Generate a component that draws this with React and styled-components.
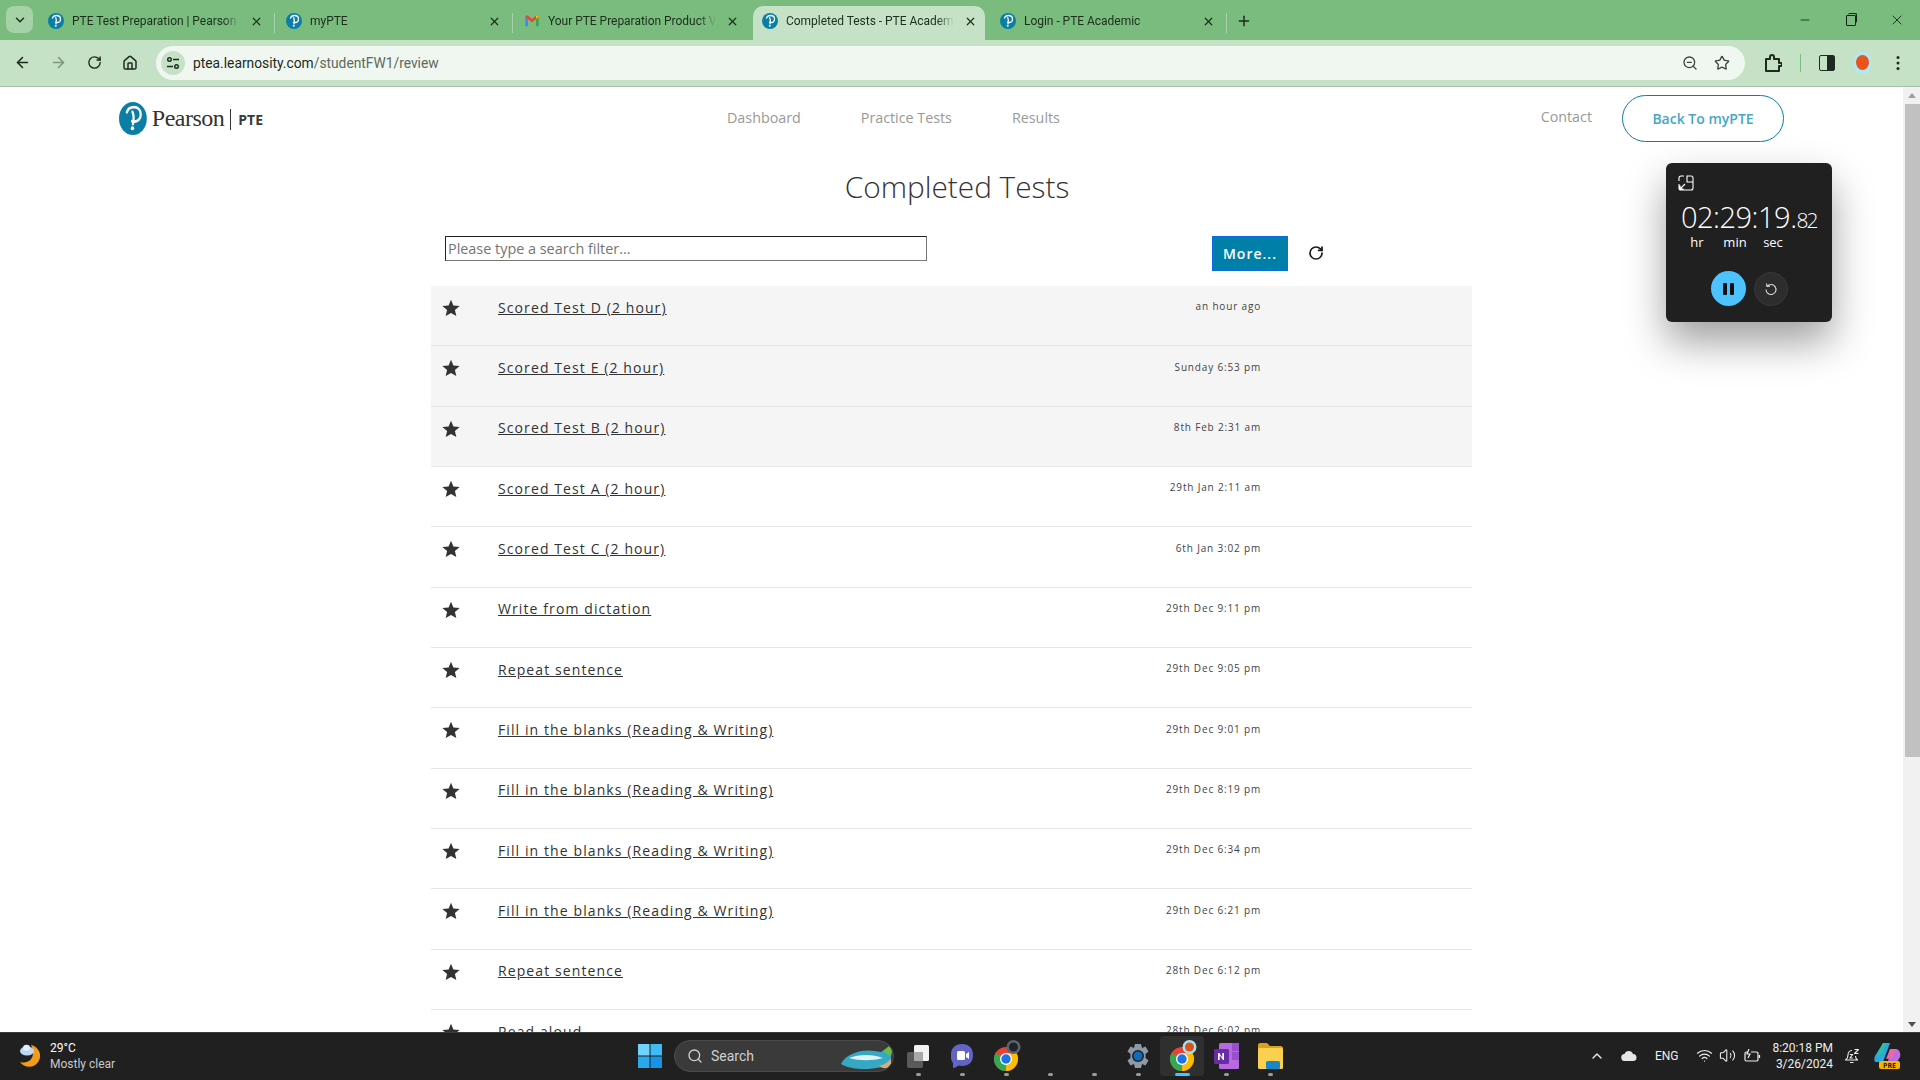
import React from 'react';
import styled, { createGlobalStyle } from 'styled-components';
import {
  ArrowLeft,
  ArrowRight,
  RotateCw,
  Home,
  ZoomOut,
  Star,
  X,
  Plus,
  Minus,
  ChevronDown,
  ChevronUp,
  Wifi,
  Volume2,
  Search,
} from 'lucide-react';

const GlobalStyle = createGlobalStyle`
  html, body {
    margin: 0;
    height: 100%;
    overflow: hidden;
    background: #fff;
    font-family: "Open Sans", "Liberation Sans", sans-serif;
  }
`;

const Screen = styled.div`
  display: flex;
  flex-direction: column;
  width: 1920px;
  height: 1080px;
  overflow: hidden;
`;

/* browser tab strip */
const TabStrip = styled.div`
  display: flex;
  align-items: flex-end;
  flex: 0 0 40px;
  height: 40px;
  padding-left: 6px;
  background: #7abc7d;
  box-sizing: border-box;
`;

const TabSearch = styled.div`
  display: flex;
  align-items: center;
  justify-content: center;
  width: 27px;
  height: 27px;
  margin: 0 4px 7px 0;
  border-radius: 8px;
  background: #a6d2a8;
  color: #1d2f1e;
`;

const Tab = styled.div`
  position: relative;
  display: flex;
  align-items: center;
  gap: 8px;
  width: 238px;
  height: 34px;
  padding: 0 11px 4px 11px;
  box-sizing: border-box;
  font-family: Roboto, sans-serif;
  font-size: 12px;
  letter-spacing: -0.03px;
  color: #1c2e1d;
  z-index: ${(p) => (p.$active ? 1 : 0)};

  &::before {
    content: '';
    position: absolute;
    top: 0;
    bottom: 0;
    left: 1.5px;
    right: 4px;
    border-radius: 10px 10px 0 0;
    background: ${(p) => (p.$active ? '#c5e2c6' : 'transparent')};
    z-index: -1;
  }

  &::after {
    content: '';
    position: absolute;
    top: 7px;
    bottom: 7px;
    right: 0;
    width: 1px;
    background: ${(p) => (p.$sep ? '#a8d2aa' : 'transparent')};
  }
`;

const TabTitle = styled.span`
  flex: 1;
  overflow: hidden;
  white-space: nowrap;
  mask-image: linear-gradient(to right, #000 90%, transparent 100%);
`;

const TabClose = styled.span`
  display: flex;
  justify-content: center;
  width: 16px;
  color: #1c2e1d;
`;

const NewTab = styled.div`
  display: flex;
  align-items: center;
  height: 34px;
  margin-left: 9px;
  padding-bottom: 4px;
  box-sizing: border-box;
  color: #1c2e1d;
`;

const WindowControls = styled.div`
  display: flex;
  align-items: center;
  gap: 33.5px;
  height: 40px;
  margin-left: auto;
  padding-right: 15px;
  color: #16221a;
`;

const RestoreIcon = styled.span`
  position: relative;
  display: block;
  width: 8px;
  height: 9px;
  border: 1px solid #16221a;
  border-radius: 1px;

  &::after {
    content: '';
    position: absolute;
    top: -3px;
    left: 1px;
    width: 8px;
    height: 9px;
    border-top: 1px solid #16221a;
    border-right: 1px solid #16221a;
    border-radius: 2px;
  }
`;

/* browser toolbar */
const Toolbar = styled.div`
  display: flex;
  align-items: center;
  flex: 0 0 47px;
  height: 47px;
  padding: 0 0 1px 13px;
  box-sizing: border-box;
  background: #c5e2c6;
  border-bottom: 1px solid #a9bfaa;
`;

const NavIcon = styled.span`
  display: flex;
  justify-content: center;
  width: 18px;
  margin-right: 18px;
  color: ${(p) => (p.$off ? '#7f9680' : '#1e2a1f')};
`;

const Omnibox = styled.div`
  display: flex;
  align-items: center;
  width: 1589px;
  height: 34px;
  margin-left: -1px;
  padding: 0 15px 0 5px;
  box-sizing: border-box;
  border-radius: 17px;
  background: #f0f7f0;
  font-family: Roboto, sans-serif;
  font-size: 13.8px;
`;

const SiteBadge = styled.span`
  display: flex;
  align-items: center;
  justify-content: center;
  width: 24px;
  height: 24px;
  margin-right: 8px;
  border-radius: 50%;
  background: #c5e2c6;
`;

const UrlHost = styled.span`
  color: #1c2a1d;
`;

const UrlPath = styled.span`
  color: #5c6a5d;
`;

const OmniIcons = styled.span`
  display: flex;
  align-items: center;
  gap: 16px;
  margin-left: auto;
  color: #3a463b;
`;

const ToolIcons = styled.div`
  display: flex;
  align-items: center;
  margin-left: 19px;
  color: #1e2a1f;
`;

const ToolDivider = styled.span`
  width: 1px;
  height: 18px;
  margin: 0 18px;
  background: #7dbb80;
`;

const SidePanelIcon = styled.span`
  display: block;
  width: 14px;
  height: 14px;
  border: 1.5px solid #1e2a1f;
  border-radius: 2px;
  background: linear-gradient(to right, transparent 50%, #1e2a1f 50%);
`;

const Profile = styled.span`
  display: flex;
  align-items: center;
  justify-content: center;
  width: 19px;
  height: 22px;
  margin-left: 18px;
  border-radius: 50%;
  background: #b4e8f0;
`;

const ProfileBall = styled.span`
  display: block;
  width: 13px;
  height: 15px;
  border-radius: 50%;
  background: #e8541c;
`;

const MenuDots = styled.span`
  display: flex;
  margin-left: 24px;
`;

/* page */
const Main = styled.div`
  position: relative;
  display: flex;
  flex: 1;
  min-height: 0;
  overflow: hidden;
`;

const Content = styled.div`
  flex: 1;
  min-width: 0;
`;

const Header = styled.header`
  display: flex;
  align-items: center;
  height: 62px;
  padding: 0 119px;
`;

const Logo = styled.div`
  display: flex;
  align-items: center;
  width: 144px;
`;

const LogoName = styled.span`
  margin-left: 5px;
  font-family: "Liberation Serif", serif;
  font-size: 24px;
  letter-spacing: -0.5px;
  color: #333;
`;

const LogoBar = styled.span`
  width: 1px;
  height: 21px;
  margin: 2px 7px 0 6px;
  background: #333;
`;

const LogoProduct = styled.span`
  margin-top: 3px;
  font-size: 14px;
  font-weight: 700;
  color: #3a3a3a;
`;

const Nav = styled.nav`
  display: flex;
  gap: 60px;
  margin: -2px 0 0 464px;
`;

const NavLink = styled.a`
  font-size: 14.3px;
  color: #999;
`;

const Contact = styled(NavLink)`
  margin: -4px 30px 0 auto;
`;

const BackButton = styled.a`
  display: flex;
  align-items: center;
  justify-content: center;
  width: 162px;
  height: 47px;
  box-sizing: border-box;
  border: 1px solid #0a7ea4;
  border-radius: 24px;
  font-size: 14px;
  font-weight: 600;
  color: #47a6c6;
`;

const Container = styled.div`
  width: 1041px;
  margin: 0 auto;
`;

const Title = styled.h1`
  margin: 17px 0 28px;
  padding-left: 11px;
  font-size: 29.8px;
  line-height: 42px;
  font-weight: 300;
  text-align: center;
  color: #333;
`;

const FilterBar = styled.div`
  display: flex;
  align-items: flex-start;
  height: 35px;
  margin-bottom: 15px;
  padding-left: 14px;
`;

const SearchInput = styled.input`
  width: 482px;
  height: 25px;
  padding: 0 2px;
  box-sizing: border-box;
  border: 2px inset #767676;
  border-width: 1.5px;
  border-radius: 0;
  font-family: "Open Sans", sans-serif;
  font-size: 14.4px;

  &::placeholder {
    color: #757575;
    opacity: 1;
  }
`;

const MoreButton = styled.button`
  width: 76px;
  height: 35px;
  margin-left: 285px;
  padding: 0;
  border: 1px solid #0a6ce0;
  background: #0080a8;
  font-family: "Open Sans", sans-serif;
  font-size: 14px;
  font-weight: 600;
  letter-spacing: 1px;
  color: #fff;
`;

const Refresh = styled.span`
  display: flex;
  margin: 9px 0 0 20px;
  color: #1c1c1c;
`;

const Row = styled.div`
  display: grid;
  grid-template-columns: 56px 1fr auto;
  height: 60.35px;
  padding: 9.7px 211px 0 11px;
  box-sizing: border-box;
  border-bottom: 1px solid #e7e7e7;
  background: ${(p) => (p.$seen ? '#f5f5f5' : '#fff')};
`;

const StarMark = styled.svg`
  display: block;
  width: 18px;
  height: 18px;
  margin-top: 3.3px;
  fill: #333;
`;

const RowTitle = styled.a`
  font-size: 14px;
  line-height: 19px;
  letter-spacing: 1.1px;
  color: #333;
  text-decoration: underline;
`;

const RowDate = styled.span`
  margin-top: 3.5px;
  font-size: 10px;
  line-height: 14px;
  letter-spacing: 0.83px;
  color: #444;
`;

const Scrollbar = styled.div`
  position: relative;
  flex: 0 0 17px;
  background: #f1f1f1;
`;

const ScrollThumb = styled.div`
  position: absolute;
  top: 17px;
  left: 2px;
  right: 0;
  height: 653px;
  background: #c1c1c1;
`;

const ScrollArrow = styled.span`
  position: absolute;
  left: 5px;
  ${(p) => (p.$down ? 'bottom: 5px;' : 'top: 6px;')}
  width: 0;
  height: 0;
  border-left: 4px solid transparent;
  border-right: 4px solid transparent;
  ${(p) =>
    p.$down
      ? 'border-top: 5px solid #505050;'
      : 'border-bottom: 5px solid #a0a0a0;'}
`;

/* stopwatch floating over the page */
const Timer = styled.div`
  position: absolute;
  top: 76px;
  right: 88px;
  display: flex;
  flex-direction: column;
  width: 166px;
  height: 159px;
  padding: 12px 0 0;
  box-sizing: border-box;
  border-radius: 6px;
  background: #202020;
  box-shadow: 0 20px 40px rgba(0, 0, 0, 0.38);
  color: #fff;
  font-family: "Open Sans", sans-serif;
`;

const TimerExpand = styled.svg`
  display: block;
  width: 16px;
  height: 16px;
  margin-left: 12px;
  fill: none;
  stroke: #fff;
  stroke-width: 1.1;
`;

const TimerClock = styled.div`
  margin-top: 7px;
  padding-left: 15px;
  font-size: 29px;
  font-weight: 300;
  letter-spacing: -0.5px;
  line-height: 38px;
  white-space: nowrap;
`;

const TimerFraction = styled.span`
  font-size: 21px;
  letter-spacing: -2px;
`;

const TimerUnits = styled.div`
  display: grid;
  grid-template-columns: 38px 38px 38px;
  margin: -5px 0 0 12px;
  font-size: 13px;
  line-height: 16px;
  text-align: center;
`;

const TimerButtons = styled.div`
  display: flex;
  align-items: center;
  gap: 8px;
  margin: 21px 0 0 45px;
`;

const PauseButton = styled.span`
  display: flex;
  align-items: center;
  justify-content: center;
  gap: 3px;
  width: 35px;
  height: 35px;
  border-radius: 50%;
  background: #4cc2ff;
`;

const PauseBar = styled.span`
  width: 4px;
  height: 12px;
  border-radius: 1px;
  background: #101010;
`;

const ResetButton = styled.span`
  display: flex;
  align-items: center;
  justify-content: center;
  width: 34px;
  height: 34px;
  box-sizing: border-box;
  border: 1px solid #383838;
  border-radius: 50%;
  background: #2d2d2d;
  color: #ddd;
`;

/* windows taskbar */
const Taskbar = styled.div`
  display: flex;
  align-items: center;
  flex: 0 0 48px;
  height: 48px;
  padding-bottom: 2px;
  box-sizing: border-box;
  border-top: 1px solid #3b3b3b;
  background: #202020;
  color: #fff;
  font-family: Roboto, sans-serif;
`;

const Weather = styled.div`
  display: flex;
  align-items: center;
  gap: 8px;
  width: 628px;
  padding-left: 19px;
  box-sizing: border-box;
`;

const WeatherText = styled.div`
  font-size: 12px;
  line-height: 16px;
`;

const WeatherSub = styled.div`
  color: #c9c9c9;
`;

const Apps = styled.div`
  display: flex;
  align-items: center;
  gap: 0;
`;

const Slot = styled.div`
  position: relative;
  display: flex;
  align-items: center;
  justify-content: center;
  width: 44px;
  height: 40px;
  border-radius: 4px;
  background: ${(p) => (p.$active ? '#2f2f2f' : 'transparent')};

  &::after {
    content: '';
    display: ${(p) => (p.$dot ? 'block' : 'none')};
    position: absolute;
    bottom: 0;
    left: 50%;
    width: ${(p) => (p.$active ? '15px' : '5px')};
    height: 3px;
    margin-left: ${(p) => (p.$active ? '-7.5px' : '-2.5px')};
    border-radius: 2px;
    background: ${(p) => (p.$active ? '#4cc2ff' : '#9b9b9b')};
  }
`;

const SearchBox = styled.div`
  position: relative;
  display: flex;
  align-items: center;
  gap: 8px;
  width: 220px;
  height: 32px;
  margin: 0 2px;
  padding-left: 12px;
  box-sizing: border-box;
  border: 1px solid #4a4a4a;
  border-radius: 16px;
  background: #3a3a3a;
  font-size: 14px;
  color: #d0d0d0;
  overflow: hidden;
`;

const SearchArt = styled.svg`
  position: absolute;
  right: 0;
  top: 3px;
  width: 54px;
  height: 26px;
`;

const Tray = styled.div`
  display: flex;
  align-items: center;
  margin-left: auto;
  color: #eee;
`;

const TrayItem = styled.span`
  display: flex;
  align-items: center;
  margin-left: ${(p) => p.$gap || 0}px;
`;

const TrayLang = styled.span`
  margin-left: 18px;
  font-size: 12px;
`;

const TrayClock = styled.div`
  margin-left: 11px;
  font-size: 12px;
  line-height: 16px;
  text-align: right;
`;

const PteIcon = ({ size = 16, height }) => (
  <svg width={size} height={height || size} viewBox="0 0 32 32" preserveAspectRatio="none">
    <circle cx="16" cy="16" r="16" fill="#0b7ea6" />
    <path
      d="M9 10c1-3 4-5 8-5 5 0 8 3 8 7s-3 7-7 7c-1 0-2 0-3-.4M15.500 9.500c1.500 3 1.500 8 .5 12"
      fill="none"
      stroke="#fff"
      strokeWidth="2.6"
      strokeLinecap="round"
    />
    <circle cx="15.500" cy="25.500" r="2" fill="#fff" />
  </svg>
);

const GmailIcon = () => (
  <svg width="16" height="16" viewBox="0 0 24 24">
    <path d="M2 20V6l4 3v11z" fill="#4285f4" />
    <path d="M18 20V9l4-3v14z" fill="#34a853" />
    <path d="M2 6c0-2 2-3 4-2l6 5 6-5c2-1 4 0 4 2l-10 8z" fill="#ea4335" />
    <path d="M18 9l4-3c0-2-2-3-4-2z" fill="#fbbc04" />
  </svg>
);

const tabs = [
  { title: 'PTE Test Preparation | Pearson PTE', icon: <PteIcon />, sep: true },
  { title: 'myPTE', icon: <PteIcon />, sep: true },
  { title: 'Your PTE Preparation Product Voucher', icon: <GmailIcon /> },
  { title: 'Completed Tests - PTE Academic', icon: <PteIcon />, active: true },
  { title: 'Login - PTE Academic', icon: <PteIcon />, sep: true },
];

const rows = [
  ['Scored Test D (2 hour)', 'an hour ago', true],
  ['Scored Test E (2 hour)', 'Sunday 6:53 pm', true],
  ['Scored Test B (2 hour)', '8th Feb 2:31 am', true],
  ['Scored Test A (2 hour)', '29th Jan 2:11 am'],
  ['Scored Test C (2 hour)', '6th Jan 3:02 pm'],
  ['Write from dictation', '29th Dec 9:11 pm'],
  ['Repeat sentence', '29th Dec 9:05 pm'],
  ['Fill in the blanks (Reading & Writing)', '29th Dec 9:01 pm'],
  ['Fill in the blanks (Reading & Writing)', '29th Dec 8:19 pm'],
  ['Fill in the blanks (Reading & Writing)', '29th Dec 6:34 pm'],
  ['Fill in the blanks (Reading & Writing)', '29th Dec 6:21 pm'],
  ['Repeat sentence', '28th Dec 6:12 pm'],
  ['Read aloud', '28th Dec 6:02 pm'],
];

const ChromeIcon = ({ badge }) => (
  <svg width="30" height="32" viewBox="0 0 30 32">
    <g transform="translate(3 7)">
      <circle cx="12" cy="12" r="12" fill="#ea4335" />
      <path d="M12 24A12 12 0 0 1 1.600 6L12 12z" fill="#34a853" />
      <path d="M12 24A12 12 0 0 0 22.400 6H12z" fill="#fbbc04" />
      <circle cx="12" cy="12" r="6" fill="#fff" />
      <circle cx="12" cy="12" r="4.700" fill="#1a73e8" />
    </g>
    <circle cx="22.500" cy="7" r="7" fill={badge === 'ball' ? '#a9dfe8' : '#5a646e'} />
    <circle cx="22.500" cy="7" r="4.500" fill={badge === 'ball' ? '#d9531e' : '#20242a'} />
  </svg>
);

const ExtensionIcon = () => (
  <svg width="18" height="18" viewBox="0 0 18 18" fill="none" stroke="#1e2a1f" strokeWidth="2" strokeLinejoin="round">
    <path d="M2 5h4V3a2 2 0 0 1 4 0v2h5v4h1.500a1.500 1.500 0 0 1 0 3H15v5H2z" />
  </svg>
);

const WindowsIcon = () => (
  <svg width="24" height="24" viewBox="0 0 24 24">
    <path d="M0 0h11.500v11.500H0z" fill="#6fd3fb" />
    <path d="M12.500 0H24v11.500H12.500z" fill="#3fbaf5" />
    <path d="M0 12.500h11.500V24H0z" fill="#2aa8ee" />
    <path d="M12.500 12.500H24V24H12.500z" fill="#1394e6" />
  </svg>
);

const TaskViewIcon = () => (
  <svg width="24" height="24" viewBox="0 0 24 24">
    <rect x="1" y="8" width="16" height="16" rx="2" fill="#5a5a5a" />
    <rect x="8" y="1" width="15" height="16" rx="1.500" fill="#f2f2f2" />
    <rect x="8" y="8" width="9" height="9" fill="#a8a8a8" />
  </svg>
);

const MeetIcon = () => (
  <svg width="24" height="26" viewBox="0 0 24 26">
    <path d="M12 1c7 0 11 4 11 11s-4 11-11 11c-1 0-2 0-3-.4L4 25c-1 .4-1-1-1-2v-3C1 18 1 15 1 12 1 5 5 1 12 1z" fill="#6264c8" />
    <rect x="7" y="8" width="8" height="9" rx="1.500" fill="#fff" />
    <path d="M16 11l3-2v7l-3-2z" fill="#fff" />
  </svg>
);

const GearIcon = () => (
  <svg width="24" height="26" viewBox="0 0 24 26">
    <path
      d="M9 1h6l1 4 3.500-1.500 3 5-3 2.500v4l3 2.500-3 5L16 21l-1 4H9l-1-4-3.500 1.500-3-5 3-2.500v-4l-3-2.500 3-5L8 5z"
      fill="#8d99a6"
    />
    <circle cx="12" cy="13" r="6" fill="#202020" />
    <circle cx="12" cy="13" r="4.500" fill="#0f6cbd" />
  </svg>
);

const OneNoteIcon = () => (
  <svg width="25" height="28" viewBox="0 0 25 28">
    <rect x="5" y="1" width="20" height="26" rx="1.500" fill="#b76ae0" />
    <path d="M18 1h7v8h-7zM18 10h7v8h-7z" fill="#9a4fcb" />
    <rect x="0" y="7" width="15" height="15" rx="1.500" fill="#6a2aa6" />
    <path d="M4 18v-7h1.300l3 4.500V11H10v7H9l-3.300-4.800V18z" fill="#fff" />
  </svg>
);

const FolderIcon = () => (
  <svg width="25" height="28" viewBox="0 0 25 28">
    <path d="M0 3c0-1 1-2 2-2h7l3 3h11c1 0 2 1 2 2v4H0z" fill="#d9a21a" />
    <rect x="0" y="6" width="25" height="21" rx="1.500" fill="#fcd04f" />
    <rect x="8" y="19" width="14" height="8" rx="1.500" fill="#1a86c8" />
  </svg>
);

const WeatherIcon = () => (
  <svg width="23" height="24" viewBox="0 0 23 24">
    <path d="M12 1a11 11 0 1 1-11 17c7 2 13-2 13-9 0-3-1-6-2-8z" fill="#f39c1b" />
    <ellipse cx="8" cy="7" rx="7" ry="4.500" fill="#bcd8f5" />
    <ellipse cx="7.500" cy="3.800" rx="3.500" ry="3" fill="#e4effb" />
  </svg>
);

const SnoozeBellIcon = () => (
  <svg width="16" height="16" viewBox="0 0 16 16" fill="none" stroke="#eee" strokeWidth="1.100" strokeLinejoin="round">
    <path d="M8 2.500C5 2.500 4 5 4 7c0 2.500-1 4-2.500 5h12C12 11 11.500 9.500 11.500 8M6 14.500h3.500" />
    <path d="M5.800 6.500h3l-3 3.500h3M10.500 1.500h4l-4 4h4" />
  </svg>
);

const CopilotIcon = () => (
  <svg width="28" height="28" viewBox="0 0 28 28">
    <path d="M9 1h7L9 20H2C0 20 0 17 1 14z" fill="#2ba8e0" />
    <path d="M9 1h5c-3 1-5 6-6 10L2 16z" fill="#30c48d" />
    <path d="M16 7h6c3 0 5 4 4 8l-3 5h-9z" fill="#b86de0" />
    <path d="M16 7h6l-3 9-7 1z" fill="#e86aa8" />
    <rect x="5" y="19" width="21" height="8" rx="2" fill="#f7b500" />
    <text x="15.500" y="25.800" fontSize="7" fontWeight="700" textAnchor="middle" fill="#1a1a1a" fontFamily="Open Sans, sans-serif">
      PRE
    </text>
  </svg>
);

const App = () => {
  return (
    <Screen>
      <GlobalStyle />
      <TabStrip>
        <TabSearch>
          <ChevronDown size={14} strokeWidth={2.5} />
        </TabSearch>
        {tabs.map((t) => (
          <Tab key={t.title} $active={t.active} $sep={t.sep}>
            {t.icon}
            <TabTitle>{t.title}</TabTitle>
            <TabClose>
              <X size={13} strokeWidth={2.2} />
            </TabClose>
          </Tab>
        ))}
        <NewTab>
          <Plus size={16} strokeWidth={2.2} />
        </NewTab>
        <WindowControls>
          <Minus size={14} strokeWidth={1.4} />
          <RestoreIcon />
          <X size={16} strokeWidth={1.3} />
        </WindowControls>
      </TabStrip>

      <Toolbar>
        <NavIcon>
          <ArrowLeft size={17} strokeWidth={2.2} />
        </NavIcon>
        <NavIcon $off>
          <ArrowRight size={17} strokeWidth={2.2} />
        </NavIcon>
        <NavIcon>
          <RotateCw size={15} strokeWidth={2.2} />
        </NavIcon>
        <NavIcon>
          <Home size={16} strokeWidth={2.2} />
        </NavIcon>
        <Omnibox>
          <SiteBadge>
            <svg width="14" height="14" viewBox="0 0 14 14" fill="none" stroke="#1e2a1f" strokeWidth="1.400">
              <circle cx="3.500" cy="3.500" r="1.800" />
              <path d="M7 3.500h6M1 10.500h6" />
              <circle cx="10.500" cy="10.500" r="1.800" />
            </svg>
          </SiteBadge>
          <UrlHost>ptea.learnosity.com</UrlHost>
          <UrlPath>/studentFW1/review</UrlPath>
          <OmniIcons>
            <ZoomOut size={16} strokeWidth={2} />
            <Star size={16} strokeWidth={2} />
          </OmniIcons>
        </Omnibox>
        <ToolIcons>
          <ExtensionIcon />
          <ToolDivider />
          <SidePanelIcon />
          <Profile>
            <ProfileBall />
          </Profile>
          <MenuDots>
            <svg width="4" height="16" viewBox="0 0 4 16" fill="#1e2a1f">
              <circle cx="2" cy="2.500" r="1.500" />
              <circle cx="2" cy="8" r="1.500" />
              <circle cx="2" cy="13.500" r="1.500" />
            </svg>
          </MenuDots>
        </ToolIcons>
      </Toolbar>

      <Main>
        <Content>
          <Header>
            <Logo>
              <PteIcon size={29} height={33} />
              <LogoName>Pearson</LogoName>
              <LogoBar />
              <LogoProduct>PTE</LogoProduct>
            </Logo>
            <Nav>
              <NavLink>Dashboard</NavLink>
              <NavLink>Practice Tests</NavLink>
              <NavLink>Results</NavLink>
            </Nav>
            <Contact>Contact</Contact>
            <BackButton>Back To myPTE</BackButton>
          </Header>
          <Container>
            <Title>Completed Tests</Title>
            <FilterBar>
              <SearchInput placeholder="Please type a search filter..." />
              <MoreButton>More...</MoreButton>
              <Refresh>
                <RotateCw size={16} strokeWidth={2.6} />
              </Refresh>
            </FilterBar>
            {rows.map(([title, date, seen], i) => (
              <Row key={i} $seen={seen}>
                <StarMark viewBox="0 0 24 24">
                  <path d="M12 1l3.200 7.600 8.300.7-6.300 5.400 1.900 8.100L12 18.500l-7.100 4.300 1.900-8.100L.5 9.300l8.300-.7z" />
                </StarMark>
                <div>
                  <RowTitle>{title}</RowTitle>
                </div>
                <RowDate>{date}</RowDate>
              </Row>
            ))}
          </Container>
        </Content>
        <Scrollbar>
          <ScrollArrow />
          <ScrollThumb />
          <ScrollArrow $down />
        </Scrollbar>

        <Timer>
          <TimerExpand viewBox="0 0 16 16">
            <path d="M6 1H3a2 2 0 0 0-2 2v3M1 9v4a2 2 0 0 0 2 2h10a2 2 0 0 0 2-2V3a2 2 0 0 0-2-2H9v6h6M2 14l5-5M2 10.500V14h3.500" />
          </TimerExpand>
          <TimerClock>
            02:29:19.<TimerFraction>82</TimerFraction>
          </TimerClock>
          <TimerUnits>
            <span>hr</span>
            <span>min</span>
            <span>sec</span>
          </TimerUnits>
          <TimerButtons>
            <PauseButton>
              <PauseBar />
              <PauseBar />
            </PauseButton>
            <ResetButton>
              <svg width="14" height="14" viewBox="0 0 14 14" fill="none" stroke="currentColor" strokeWidth="1.100">
                <path d="M3 4.500A5 5 0 1 1 2 7.500M2.500 1.500l.5 3 3-.3" />
              </svg>
            </ResetButton>
          </TimerButtons>
        </Timer>
      </Main>

      <Taskbar>
        <Weather>
          <WeatherIcon />
          <WeatherText>
            <div>29°C</div>
            <WeatherSub>Mostly clear</WeatherSub>
          </WeatherText>
        </Weather>
        <Apps>
          <Slot>
            <WindowsIcon />
          </Slot>
          <SearchBox>
            <Search size={16} strokeWidth={2} />
            Search
            <SearchArt viewBox="0 0 54 26">
              <path d="M2 20C8 8 26 4 42 8l8-5 3 5-2 10c-6 8-36 10-49 2z" fill="#35a8c4" />
              <path d="M10 14c10-4 24-4 34 0-10 3-24 3-34 0z" fill="#dff2f4" />
              <path d="M40 22c4-1 9-3 12-8v8c-3 3-8 3-12 0z" fill="#d6ac7c" />
              <path d="M44 7l6-5 3 4-2 6z" fill="#6ebc45" />
            </SearchArt>
          </SearchBox>
          <Slot $dot>
            <TaskViewIcon />
          </Slot>
          <Slot $dot>
            <MeetIcon />
          </Slot>
          <Slot $dot>
            <ChromeIcon />
          </Slot>
          <Slot $dot />
          <Slot $dot />
          <Slot $dot>
            <GearIcon />
          </Slot>
          <Slot $dot $active>
            <ChromeIcon badge="ball" />
          </Slot>
          <Slot $dot>
            <OneNoteIcon />
          </Slot>
          <Slot $dot>
            <FolderIcon />
          </Slot>
        </Apps>
        <Tray>
          <TrayItem>
            <ChevronUp size={16} strokeWidth={2} />
          </TrayItem>
          <TrayItem $gap={16}>
            <svg width="16" height="11" viewBox="0 0 16 11">
              <path d="M4 11a3.500 3.500 0 0 1-.5-7A4.500 4.500 0 0 1 12 4a3.500 3.500 0 0 1 0 7z" fill="#e6e6e6" />
            </svg>
          </TrayItem>
          <TrayLang>ENG</TrayLang>
          <TrayItem $gap={18}>
            <Wifi size={17} strokeWidth={1.6} />
          </TrayItem>
          <TrayItem $gap={6}>
            <Volume2 size={17} strokeWidth={1.5} />
          </TrayItem>
          <TrayItem $gap={8}>
            <svg width="17" height="14" viewBox="0 0 17 14" fill="none" stroke="#eee" strokeWidth="1.200">
              <path d="M4 3H2.500A1.500 1.500 0 0 0 1 4.500v6A1.500 1.500 0 0 0 2.500 12h10a1.500 1.500 0 0 0 1.500-1.500v-6A1.500 1.500 0 0 0 12.500 3H7M15.500 6v3M5 0L3 5h3l-2 4" />
            </svg>
          </TrayItem>
          <TrayClock>
            <div>8:20:18 PM</div>
            <div>3/26/2024</div>
          </TrayClock>
          <TrayItem $gap={11}>
            <SnoozeBellIcon />
          </TrayItem>
          <TrayItem $gap={14}>
            <CopilotIcon />
          </TrayItem>
          <TrayItem $gap={18} />
        </Tray>
      </Taskbar>
    </Screen>
  );
};

export default App;
